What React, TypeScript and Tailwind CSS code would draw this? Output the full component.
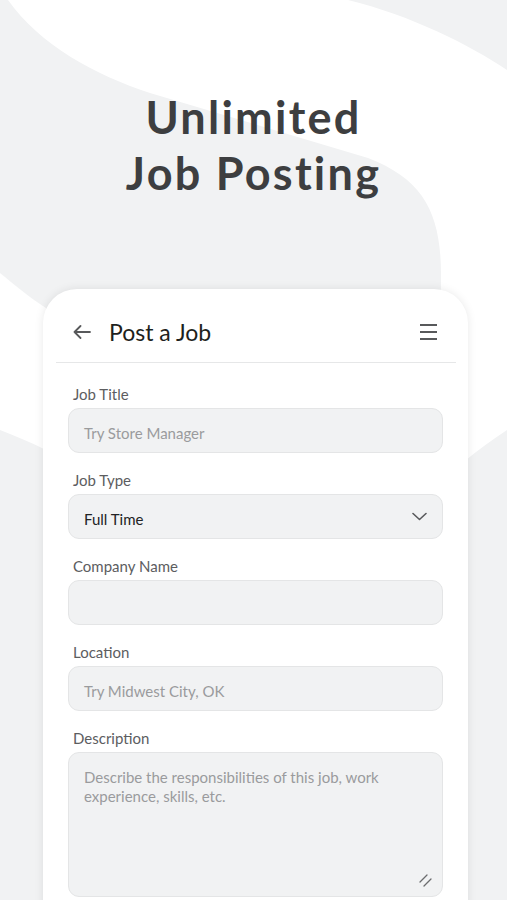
import React from "react";

const font = { fontFamily: "Lato, 'Noto Sans', sans-serif" };

function Field({ label, children }: { label: string; children: React.ReactNode }) {
  return (
    <div className="flex flex-col">
      <div className="pl-[5px] text-[15px] leading-[20px] text-[#5c5d5f] mb-[4px]">{label}</div>
      {children}
    </div>
  );
}

function Input({ placeholder, value }: { placeholder?: string; value?: string }) {
  return (
    <div className="h-[45px] rounded-[11px] bg-[#f1f2f3] border border-[#e4e5e6] flex items-center px-[15px] pt-[5px] text-[15px]">
      {value ? (
        <span className="text-[#222324]">{value}</span>
      ) : (
        <span className="text-[#9a9b9d]">{placeholder}</span>
      )}
    </div>
  );
}

export default function App() {
  return (
    <div className="relative w-full h-[900px] overflow-hidden bg-[#f1f2f3]" style={font}>
      <svg className="absolute inset-0" width="507" height="900" viewBox="0 0 507 900">
        <path
          d="M 8 0 L 348 0 C 410 15 470 45 507 70 L 507 430 C 492 440 478 450 466 460 L 441 460 L 441 275 C 441 215 425 180 368 158 L 150 93 C 95 75 40 45 8 0 Z"
          fill="#ffffff"
        />
        <path d="M 0 273 C 15 285 30 298 46 308 L 46 450 C 30 442 15 436 0 430 Z" fill="#ffffff" />
      </svg>

      <div className="relative flex flex-col">
        <h1 className="pt-[89px] text-center text-[45px] leading-[56px] font-bold tracking-[0.05em] text-[#3d3e40]">
          Unlimited
          <br />
          Job Posting
        </h1>

        <div className="mt-[88px] ml-[43px] w-[425px] h-[620px] bg-white rounded-t-[34px] shadow-[0_0_10px_rgba(0,0,0,0.09)] flex flex-col">
          <div className="h-[73px] flex items-center pl-[30px] pr-[31px] pt-[12px]">
            <svg width="18" height="14" viewBox="0 0 18 14" fill="none" stroke="#58595b" strokeWidth="1.8" strokeLinecap="round" strokeLinejoin="round">
              <path d="M17 7 H1.5 M7.5 1 L1.5 7 L7.5 13" />
            </svg>
            <span className="ml-[18px] text-[23px] leading-[28px] text-[#1e1f20]">Post a Job</span>
            <div className="flex-1" />
            <svg width="17" height="16" viewBox="0 0 17 16" fill="none" stroke="#58595b" strokeWidth="2">
              <path d="M0 1 H17 M0 8 H17 M0 15 H17" />
            </svg>
          </div>
          <div className="mx-[13px] mr-[12px] h-[1px] bg-[#e6e7e8]" />

          <div className="px-[25px] pt-[21px] flex flex-col gap-[17px]">
            <Field label="Job Title">
              <Input placeholder="Try Store Manager" />
            </Field>
            <Field label="Job Type">
              <div className="h-[45px] rounded-[11px] bg-[#f1f2f3] border border-[#e4e5e6] flex items-center pl-[15px] pr-[15px] text-[15px]">
                <span className="text-[#222324] pt-[5px]">Full Time</span>
                <div className="flex-1" />
                <svg width="15" height="9" viewBox="0 0 15 9" fill="none" stroke="#58595b" strokeWidth="1.6" strokeLinecap="round" strokeLinejoin="round">
                  <path d="M1 1.5 L7.5 7.5 L14 1.5" />
                </svg>
              </div>
            </Field>
            <Field label="Company Name">
              <Input placeholder="" />
            </Field>
            <Field label="Location">
              <Input placeholder="Try Midwest City, OK" />
            </Field>
            <Field label="Description">
              <div className="relative h-[145px] rounded-[11px] bg-[#f1f2f3] border border-[#e4e5e6] px-[15px] pt-[15px] text-[15px] leading-[19px] text-[#9a9b9d]">
                Describe the responsibilities of this job, work
                <br />
                experience, skills, etc.
                <svg className="absolute right-[10px] bottom-[9px]" width="13" height="13" viewBox="0 0 13 13" fill="none" stroke="#6b6c6e" strokeWidth="1.3" strokeLinecap="round">
                  <path d="M1 8 L8 1 M5 12 L12 5" />
                </svg>
              </div>
            </Field>
          </div>
        </div>
      </div>
    </div>
  );
}
